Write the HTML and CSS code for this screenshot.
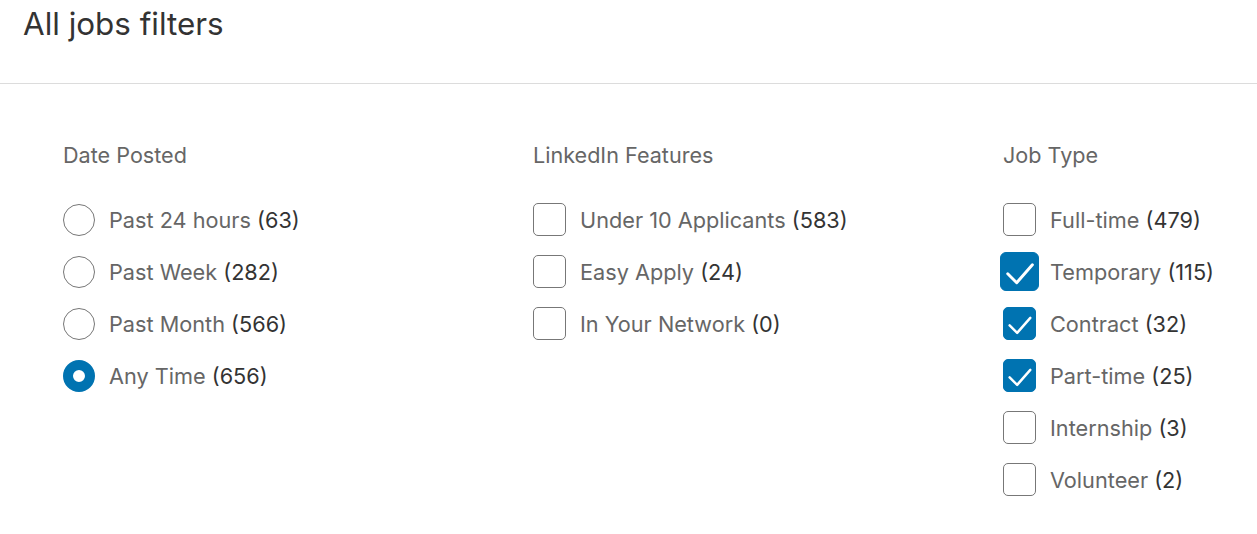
FILE: index.html
```html
<!DOCTYPE html>
<html><head>
<link rel="stylesheet" href="styles.css">
</head>
<body>

<div class="header">
  <h1 class="title">All jobs filters</h1>
</div>

<div class="filters">

  <div class="column">
    <h3 class="column-title">Date Posted</h3>
    <ul class="options">
      <li class="option"><span class="radio"></span><span class="label">Past 24 hours <b>(63)</b></span></li>
      <li class="option"><span class="radio"></span><span class="label">Past Week <b>(282)</b></span></li>
      <li class="option"><span class="radio"></span><span class="label">Past Month <b>(566)</b></span></li>
      <li class="option"><span class="radio selected"></span><span class="label">Any Time <b>(656)</b></span></li>
    </ul>
  </div>

  <div class="column">
    <h3 class="column-title">LinkedIn Features</h3>
    <ul class="options">
      <li class="option"><span class="check"></span><span class="label">Under 10 Applicants <b>(583)</b></span></li>
      <li class="option"><span class="check"></span><span class="label">Easy Apply <b>(24)</b></span></li>
      <li class="option"><span class="check"></span><span class="label">In Your Network <b>(0)</b></span></li>
    </ul>
  </div>

  <div class="column">
    <h3 class="column-title">Job Type</h3>
    <ul class="options">
      <li class="option"><span class="check"></span><span class="label">Full-time <b>(479)</b></span></li>
      <li class="option"><span class="check checked hover"><svg viewBox="0 0 33 33"><path d="M6 18.5l8 8 14-16"/></svg></span><span class="label">Temporary <b>(115)</b></span></li>
      <li class="option"><span class="check checked"><svg viewBox="0 0 33 33"><path d="M6 18.5l8 8 14-16"/></svg></span><span class="label">Contract <b>(32)</b></span></li>
      <li class="option"><span class="check checked"><svg viewBox="0 0 33 33"><path d="M6 18.5l8 8 14-16"/></svg></span><span class="label">Part-time <b>(25)</b></span></li>
      <li class="option"><span class="check"></span><span class="label">Internship <b>(3)</b></span></li>
      <li class="option"><span class="check"></span><span class="label">Volunteer <b>(2)</b></span></li>
    </ul>
  </div>

</div>

</body>
</html>
```

FILE: styles.css
```css
body {
  margin: 0;
  background: #fff;
  font-family: Inter, "Liberation Sans", Arial, sans-serif;
  color: #666;
}

.header {
  height: 84px;
  border-bottom: 1px solid #dcdcdc;
  padding: 4px 0 0 23px;
  box-sizing: border-box;
}

.title {
  margin: 0;
  font-size: 31.4px;
  line-height: 40px;
  font-weight: normal;
  color: #333;
}

/* three filter columns */
.filters {
  display: grid;
  grid-template-columns: 470px 470px 1fr;
  padding: 59px 0 40px 63px;
}

.column-title {
  margin: 0 0 36px;
  font-size: 21.6px;
  line-height: 24px;
  font-weight: normal;
  color: #666;
}

.options {
  list-style: none;
  margin: 0;
  padding: 0;
  display: flex;
  flex-direction: column;
  gap: 19px;
}

.option {
  display: flex;
  align-items: center;
  gap: 14px;
  height: 33px;
}

.label {
  font-size: 21.7px;
  color: #666;
  white-space: nowrap;
}
.label b {
  font-weight: normal;
  color: #333;
}

.radio {
  width: 32px;
  height: 32px;
  box-sizing: border-box;
  border: 1.5px solid #777;
  border-radius: 50%;
  flex: none;
}
.radio.selected {
  border: 10px solid #0073b1;
  background: #fff;
}

.check {
  width: 33px;
  height: 33px;
  box-sizing: border-box;
  border: 1.5px solid #777;
  border-radius: 5px;
  flex: none;
  position: relative;
}
.check.checked {
  background: #0073b1;
  border-color: #0073b1;
}
.check.hover {
  width: 39px;
  height: 39px;
  margin: -3px;
  border-radius: 6px;
}
.check svg {
  position: absolute;
  inset: 0;
  width: 100%;
  height: 100%;
  fill: none;
  stroke: #fff;
  stroke-width: 2.6;
  stroke-linecap: round;
  stroke-linejoin: round;
}
```
